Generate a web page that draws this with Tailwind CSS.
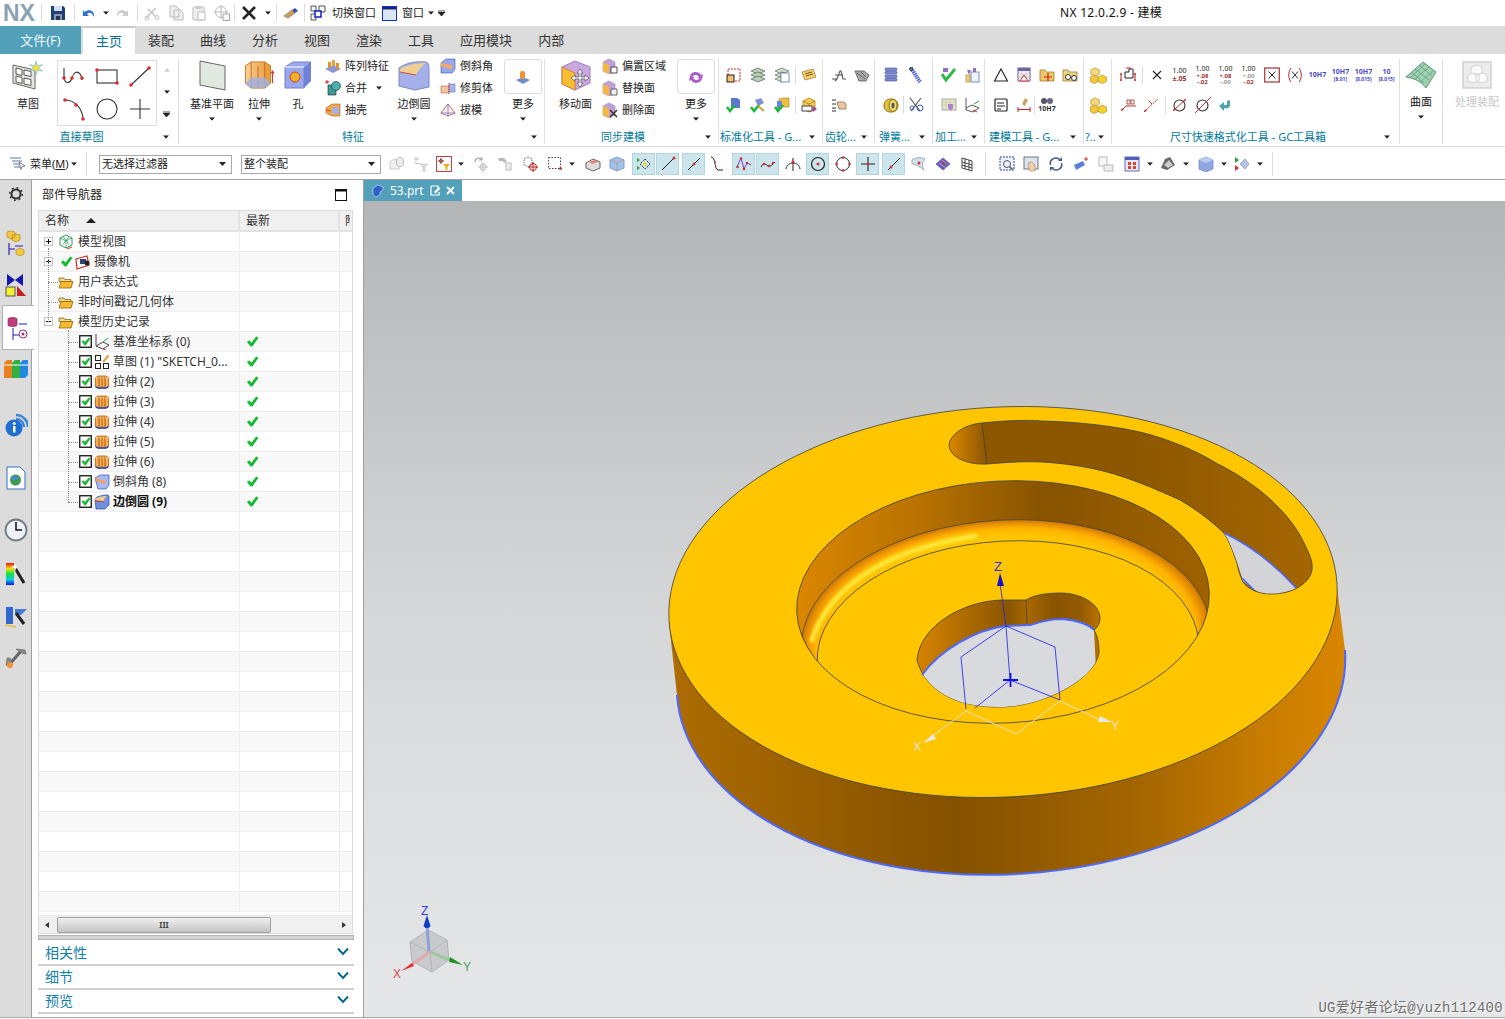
<!DOCTYPE html>
<html lang="zh">
<head>
<meta charset="utf-8">
<title>NX 12.0.2.9 - 建模</title>
<script src="https://cdn.jsdelivr.net/npm/@tailwindcss/browser@4"></script>
</head>
<body class="m-0 bg-white">
<svg class="absolute w-0 h-0" width="0" height="0">
<defs>
<linearGradient id="gOrange" x1="0" y1="0" x2="1" y2="0"><stop offset="0" stop-color="#f8d090"/><stop offset="1" stop-color="#e89a30"/></linearGradient>
<linearGradient id="gRainbow" x1="0" y1="0" x2="0" y2="1"><stop offset="0" stop-color="#f01010"/><stop offset=".25" stop-color="#f0e010"/><stop offset=".5" stop-color="#10e040"/><stop offset=".75" stop-color="#10d0e0"/><stop offset="1" stop-color="#1010e0"/></linearGradient>
</defs>
<symbol id="chk" viewBox="0 0 14 14"><path d="M1 7.5l2.800-1.800 2 2.600L11 1.500l2.500 1.400L6.800 12.500H5z" fill="#18b934"/></symbol>
<symbol id="tchk" viewBox="0 0 13 13"><rect x=".75" y=".75" width="11.500" height="11.500" fill="#fff" stroke="#111" stroke-width="1.300"/><path d="M2.500 6.500l2-1.200 1.400 1.800L10 2.500l1.500 1-4.600 6.800H5.600z" fill="#18b934"/></symbol>
<symbol id="plus" viewBox="0 0 9 9"><rect x=".5" y=".5" width="8" height="8" fill="#fff" stroke="#c4c4c4"/><path d="M2 4.500h5M4.500 2v5" stroke="#111"/></symbol>
<symbol id="minus" viewBox="0 0 9 9"><rect x=".5" y=".5" width="8" height="8" fill="#fff" stroke="#c4c4c4"/><path d="M2 4.500h5" stroke="#111"/></symbol>
<symbol id="folder" viewBox="0 0 16 14"><path d="M1 3h5l1 1.500h6v2H1z" fill="#f4d890" stroke="#8a6a10" stroke-width=".8"/><path d="M1 13L3 6.500h12L13 13z" fill="#f8b830" stroke="#8a6a10" stroke-width=".8"/></symbol>
<symbol id="ext" viewBox="0 0 16 16"><path d="M1.500 3.500L4 2h8l2.500 1.500v9L12 14H4l-2.500-1.500z" fill="#f4b050" stroke="#b85a10" stroke-width=".8"/><path d="M1.500 4h13" stroke="#fbe0b0" stroke-width="1"/><path d="M5 3v10M8 3v10M11 3v10" stroke="#b85a10"/><path d="M1.500 12.500L4 14h8l2.500-1.500" fill="none" stroke="#2040c0" stroke-width="1.300"/></symbol>
<symbol id="down" viewBox="0 0 7 4"><path d="M0 0h7L3.500 4z" fill="#222"/></symbol>
<symbol id="big-extrude" viewBox="0 0 32 32"><path d="M2 6l6-4h14l6 4v18l-6 5H8l-6-5z" fill="url(#gOrange)" stroke="#c47a2a"/><path d="M8 2v27M15 6v22M22 2v27" stroke="#c05030" stroke-width=".8" fill="none"/><path d="M2 24l6-6h14l6 6-6 5H8z" fill="#9db0e8" opacity=".8"/><path d="M30 24V12M28.500 14l1.500-3 1.500 3" stroke="#d02020" fill="none"/></symbol>
<symbol id="i-gear" viewBox="0 0 16 16"><circle cx="8" cy="8" r="4.500" fill="none" stroke="#333" stroke-width="2"/><circle cx="8" cy="8" r="6.300" fill="none" stroke="#333" stroke-width="1.500" stroke-dasharray="2 2.900"/></symbol>
<symbol id="yellowcube" viewBox="0 0 16 16"><path d="M8 1l6 3v8l-6 3-6-3V4z" fill="#f2cc50" stroke="#a88020" stroke-width=".8"/><path d="M2 4l6 3 6-3M8 7v8" fill="none" stroke="#a88020" stroke-width=".8"/></symbol>
<symbol id="yellowcubes" viewBox="0 0 20 20"><path d="M6 1l5 2.500v5L6 11 1 8.500v-5z" fill="#f4d87c" stroke="#a88020" stroke-width=".7"/><path d="M5 9.500l5 2.500v5l-5 2.500L0 17v-5z" fill="#f2c840" stroke="#a88020" stroke-width=".7"/><path d="M14.500 9.500l5 2.500v5l-5 2.500-5-2.500v-5z" fill="#f6d030" stroke="#a88020" stroke-width=".7"/></symbol>
</svg>

<div class="w-[1505px] h-[1019px] overflow-hidden flex flex-col bg-white text-[#222] text-[11px] leading-[14px] font-['Noto_Sans','Noto_Sans_CJK_SC',sans-serif]">

<!-- title bar -->
<header class="relative h-[26px] flex items-center shrink-0 bg-white">
  <span class="w-[41px] pl-[3px] text-[23px] leading-[26px] font-bold text-[#8ba2b2] font-['Liberation_Sans',sans-serif]">NX</span>
  <i class="w-px h-[18px] bg-[#ddd]"></i>
  <div class="w-[32px] flex justify-center"><svg class="w-[14px] h-[14px]" viewBox="0 0 14 14"><path d="M0 0h12l2 2v12H0z" fill="#1c3f78"/><path d="M3 0h8v5H3z" fill="#d4dfee"/><path d="M3 8h8v6H3z" fill="#8c99ac"/><path d="M5 10h4v4H5z" fill="#22334f"/></svg></div>
  <i class="w-px h-[18px] bg-[#ddd]"></i>
  <div class="w-[26px] flex justify-center ml-[1px]"><svg class="w-4 h-4" viewBox="0 0 16 16"><path d="M13 12C14 6 8 3 3.500 7L2 5v6h6L6 9c3-2.500 5-1 7 3z" fill="#2f72c8"/></svg></div>
  <svg class="w-[6px] h-[4px] ml-[1px]" viewBox="0 0 7 4"><use href="#down"/></svg>
  <div class="w-[26px] flex justify-center"><svg class="w-4 h-4" viewBox="0 0 16 16"><path d="M3 12C2 6 8 3 12.500 7L14 5v6H8l2-2C7 6.500 5 8 3 12z" fill="#ccc"/></svg></div>
  <i class="w-px h-[18px] bg-[#ddd] ml-[2px]"></i>
  <div class="flex ml-[2px]">
    <div class="w-6 flex justify-center"><svg class="w-4 h-4" viewBox="0 0 16 16"><path d="M2 13L12 3M4 4l8 8" stroke="#c4c4c4" stroke-width="1.500"/><circle cx="3" cy="13" r="2" fill="none" stroke="#c4c4c4"/><circle cx="13" cy="12.500" r="2" fill="none" stroke="#c4c4c4"/></svg></div>
    <div class="w-[23px] flex justify-center"><svg class="w-4 h-4" viewBox="0 0 16 16"><path d="M2 1h6l3 3v8H2z M6 5h6l3 3v7H6z" fill="#f0f0f0" stroke="#bbb"/></svg></div>
    <div class="w-6 flex justify-center"><svg class="w-4 h-4" viewBox="0 0 16 16"><rect x="2" y="2" width="11" height="13" rx="1" fill="#eee" stroke="#bbb"/><rect x="5" y="1" width="5" height="3" fill="#ccc"/><path d="M7 7h7v8H7z" fill="#fff" stroke="#bbb"/></svg></div>
    <div class="w-[21px] flex justify-center"><svg class="w-4 h-4" viewBox="0 0 16 16"><circle cx="7" cy="7" r="5.500" fill="none" stroke="#bbb"/><path d="M7 0v14M0 7h14" stroke="#bbb"/><rect x="9" y="9" width="6.500" height="6.500" fill="#f8f8f8" stroke="#aaa"/></svg></div>
  </div>
  <i class="w-px h-[18px] bg-[#ddd] ml-[2px]"></i>
  <div class="w-[28px] flex justify-center"><svg class="w-[14px] h-[14px]" viewBox="0 0 14 14"><path d="M1 1l12 12M13 1L1 13" stroke="#222" stroke-width="2.600"/></svg></div>
  <svg class="w-[6px] h-[4px] ml-[2px]" viewBox="0 0 7 4"><use href="#down"/></svg>
  <i class="w-px h-[18px] bg-[#ddd] ml-[5px]"></i>
  <div class="w-[27px] flex justify-center"><svg class="w-4 h-4" viewBox="0 0 16 16"><path d="M1 11l8-6 3 3-7 5z" fill="#c8a060" stroke="#806030" stroke-width=".6"/><path d="M9 5l3-2 3 3-3 2z" fill="#3050a0"/></svg></div>
  <i class="w-px h-[18px] bg-[#ddd]"></i>
  <div class="w-[26px] flex justify-center"><svg class="w-4 h-4" viewBox="0 0 16 16"><path d="M1 1h5v5H1zM9 1h6v6H9zM1 9h5v6H1z" fill="#f4f4f4" stroke="#555"/><rect x="5" y="6" width="6" height="6" fill="#fff" stroke="#1020d0" stroke-width="1.500"/></svg></div>
  <span class="w-[46px] ml-px text-[11px]">切换窗口</span>
  <div class="w-[20px] flex justify-center ml-[1px]"><svg class="w-[15px] h-[15px]" viewBox="0 0 15 15"><rect x=".5" y=".5" width="14" height="14" fill="#dbe6f4" stroke="#1030e0"/><rect x="1" y="1" width="13" height="2.500" fill="#14286a"/></svg></div>
  <span class="w-[25px] ml-[3px] text-[11px]">窗口</span>
  <svg class="w-[6px] h-[4px] ml-[1px]" viewBox="0 0 7 4"><use href="#down"/></svg>
  <svg class="w-[7px] h-[6px] ml-[4px]" viewBox="0 0 7 6"><path d="M0 0h7M0 2h7L3.500 6z" stroke="#222" stroke-width=".8" fill="#222"/></svg>
  <span class="absolute left-[1060px] top-[6px] text-[12px] leading-[14px] tracking-[.3px] text-[#111]">NX 12.0.2.9 - 建模</span>
</header>

<!-- tabs -->
<nav class="h-[28px] shrink-0 bg-[#dcdcdc] flex items-stretch text-[13px] leading-[28px] text-[#333]">
  <a class="w-[81px] text-center bg-[#53a0bb] text-[#eef7fa]">文件(F)</a>
  <span class="w-[2px]"></span>
  <a class="px-[13px] bg-white text-[#00708f] border-t-2 border-[#c8c8c8] leading-[26px]">主页</a>
  <a class="px-[13px]">装配</a><a class="px-[13px]">曲线</a><a class="px-[13px]">分析</a><a class="px-[13px]">视图</a><a class="px-[13px]">渲染</a><a class="px-[13px]">工具</a><a class="px-[13px]">应用模块</a><a class="px-[13px]">内部</a>
</nav>

<!-- ribbon -->
<section class="h-[93px] shrink-0 flex bg-white border-b border-[#ddd]">

  <!-- 直接草图 -->
  <div class="w-[179px] shrink-0 flex flex-col border-r border-[#e0e0e0] mt-[5px] mb-[2px]">
    <div class="h-[73px] flex pt-[1px]">
      <div class="w-[57px] flex flex-col items-center pr-[1px]">
        <svg class="w-[32px] h-[32px]" viewBox="0 0 32 32"><path d="M1 5l22 5v19L1 23z" fill="#e4e8e0" stroke="#666"/><path d="M4 8l6 1.500v6l-6-1.500zM12 10l7 1.500v5l-7-1.500zM4 16l6 1.500v6l-6-1.500zM12 18l7 1.500v6l-7-1.500z" fill="#fff" stroke="#555"/><path d="M24 1l1.500 5 5-1.500-4 3.500 4 3-5-1-1.500 5-1.500-5-5 1 4-3-4-3.500 5 1.500z" fill="#f4e040" stroke="#6ab0e8" stroke-width=".6"/></svg>
        <span class="mt-[5px] h-[14px]">草图</span>
      </div>
      <div class="w-[100px] h-[66px] border border-[#ddd] grid grid-cols-3 grid-rows-2">
        <div class="flex justify-center items-center"><svg class="w-[26px] h-[26px]" viewBox="0 0 26 26"><path d="M3 14V4M3 14c1 6 6 6 8 0 1-5 5-8 8-4 2 2 2 5 2 6" fill="none" stroke="#333" stroke-width="1.100"/><circle cx="3" cy="14" r="1.800" fill="#d83030"/><circle cx="11" cy="14" r="1.800" fill="#d83030"/><circle cx="21" cy="14" r="1.800" fill="#d83030"/></svg></div>
        <div class="flex justify-center items-center"><svg class="w-[26px] h-[26px]" viewBox="0 0 26 26"><rect x="3" y="6" width="20" height="13" fill="none" stroke="#333" stroke-width="1.100"/><circle cx="3" cy="6" r="1.800" fill="#d83030"/><circle cx="23" cy="19" r="1.800" fill="#d83030"/></svg></div>
        <div class="flex justify-center items-center"><svg class="w-[26px] h-[26px]" viewBox="0 0 26 26"><path d="M4 21L22 4" stroke="#333" stroke-width="1.100"/><circle cx="4" cy="21" r="1.800" fill="#d83030"/><circle cx="22" cy="4" r="1.800" fill="#d83030"/></svg></div>
        <div class="flex justify-center items-center"><svg class="w-[26px] h-[26px]" viewBox="0 0 26 26"><path d="M4 4c8 0 17 6 18 19" fill="none" stroke="#333" stroke-width="1.100"/><circle cx="4" cy="4" r="1.800" fill="#d83030"/><circle cx="22" cy="23" r="1.800" fill="#d83030"/><circle cx="15" cy="9" r="1.800" fill="#d83030"/></svg></div>
        <div class="flex justify-center items-center"><svg class="w-[26px] h-[26px]" viewBox="0 0 26 26"><circle cx="13" cy="13" r="10" fill="none" stroke="#333" stroke-width="1.100"/></svg></div>
        <div class="flex justify-center items-center"><svg class="w-[26px] h-[26px]" viewBox="0 0 26 26"><path d="M13 3v20M3 13h20" stroke="#333" stroke-width="1.100"/></svg></div>
      </div>
      <div class="w-[17px] flex flex-col items-center ml-[1px]">
        <svg class="w-[6px] h-[4px] mt-[8px]" viewBox="0 0 7 4"><path d="M0 4h7L3.500 0z" fill="#ccc"/></svg>
        <svg class="w-[6px] h-[4px] mt-[18px]" viewBox="0 0 7 4"><use href="#down"/></svg>
        <svg class="w-[7px] h-[6px] mt-[17px]" viewBox="0 0 7 6"><path d="M0 0h7M0 2h7L3.500 6z" stroke="#222" stroke-width=".8" fill="#222"/></svg>
      </div>
    </div>
    <div class="flex-1 flex items-center pl-[0px] pr-[9px]"><span class="flex-1 text-center text-[#007a9c]">直接草图</span><svg class="w-[6px] h-[4px]" viewBox="0 0 7 4"><use href="#down"/></svg></div>
  </div>

  <!-- 特征 -->
  <div class="w-[366px] shrink-0 flex flex-col border-r border-[#e0e0e0] mt-[5px] mb-[2px]">
    <div class="h-[73px] flex pt-[1px]">
      <div class="w-[56px] ml-[5px] flex flex-col items-center">
        <svg class="w-[30px] h-[31px]" viewBox="0 0 30 31"><path d="M3 1l25 5v24L3 25z" fill="#dfe9df" stroke="#666"/></svg>
        <span class="mt-[6px]">基准平面</span>
        <svg class="w-[6px] h-[4px] mt-[6px]" viewBox="0 0 7 4"><use href="#down"/></svg>
      </div>
      <div class="w-[36px] flex flex-col items-center ml-[1px]">
        <svg class="w-[32px] h-[31px]"><use href="#big-extrude"/></svg>
        <span class="mt-[6px]">拉伸</span>
        <svg class="w-[6px] h-[4px] mt-[6px]" viewBox="0 0 7 4"><use href="#down"/></svg>
      </div>
      <div class="w-[40px] flex flex-col items-center ml-[1px]">
        <svg class="w-[30px] h-[31px]" viewBox="0 0 30 31"><path d="M2 7l8-5h18l-7 6v20H2z" fill="#9aa8ee" stroke="#7080c8"/><path d="M21 8l7-6v19l-7 7z" fill="#7082d8"/><path d="M2 7h19" stroke="#fff"/><circle cx="12" cy="17" r="5" fill="#f4b028" stroke="#d04020"/></svg>
        <span class="mt-[6px]">孔</span>
      </div>
      <div class="w-[66px] ml-[7px] flex flex-col -mt-[5px]">
        <div class="h-[22px] flex items-center"><svg class="w-4 h-4" viewBox="0 0 16 16"><path d="M0 11l8-4 8 4-8 4z" fill="#8898d8"/><rect x="3" y="4" width="3" height="6" fill="#e89030"/><rect x="7" y="2" width="3" height="6" fill="#e8a040"/><rect x="11" y="5" width="3" height="6" fill="#e89030"/></svg><span class="ml-[4px] whitespace-nowrap">阵列特征</span></div>
        <div class="h-[22px] flex items-center"><svg class="w-4 h-4" viewBox="0 0 16 16"><path d="M3 5h8v10H3z" fill="#3d9a98" stroke="#222" stroke-width=".6"/><circle cx="11" cy="6" r="4.500" fill="#48b0b0" stroke="#222" stroke-width=".6"/><path d="M0 2h4M2 0v4" stroke="#d02020"/></svg><span class="ml-[4px]">合并</span><svg class="w-[6px] h-[4px] ml-[9px]" viewBox="0 0 7 4"><use href="#down"/></svg></div>
        <div class="h-[22px] flex items-center"><svg class="w-4 h-4" viewBox="0 0 16 16"><path d="M1 6l6-4h8v12H7l-6-3z" fill="#f0a848" stroke="#a06020" stroke-width=".6"/><path d="M7 5h7v7H7z" fill="#a8b0e0"/><path d="M1 8l5 1" stroke="#d04020"/></svg><span class="ml-[4px]">抽壳</span></div>
      </div>
      <div class="w-[46px] flex flex-col items-center">
        <svg class="w-[32px] h-[31px]" viewBox="0 0 32 31"><path d="M1 8c6-5 18-7 26-6 3 0 4 2 4 8v17L17 30 1 26z" fill="#a5b0ea" stroke="#7a88c8"/><path d="M2 9c6-4 18-6 26-6-4 2-9 9-10 12L2 12z" fill="#f0d090"/><path d="M2 12l16 3" stroke="#d05030"/></svg>
        <span class="mt-[6px]">边倒圆</span>
        <svg class="w-[6px] h-[4px] mt-[6px]" viewBox="0 0 7 4"><use href="#down"/></svg>
      </div>
      <div class="w-[67px] flex flex-col -mt-[5px]">
        <div class="h-[22px] flex items-center ml-[3px]"><svg class="w-4 h-4" viewBox="0 0 16 16"><path d="M1 5l5-4h9v10l-3 4H1z" fill="#98a8e8" stroke="#3050b0" stroke-width=".6"/><path d="M1 5l11 2v4L1 8z" fill="#f4a860"/></svg><span class="ml-[4px]">倒斜角</span></div>
        <div class="h-[22px] flex items-center ml-[3px]"><svg class="w-4 h-4" viewBox="0 0 16 16"><path d="M1 6h8v7H1z" fill="#f0c8a0" stroke="#c06030" stroke-width=".6"/><path d="M9 4h6v8H9z" fill="#a8b4e8" stroke="#6070c0" stroke-width=".6"/><path d="M9 3v11" stroke="#d03030" stroke-dasharray="1 1"/></svg><span class="ml-[4px]">修剪体</span></div>
        <div class="h-[22px] flex items-center ml-[3px]"><svg class="w-4 h-4" viewBox="0 0 16 16"><path d="M1 11l7-9 7 9-7 3z" fill="#f8f0f0" stroke="#d04040" stroke-width=".8"/><path d="M1 11h14M8 2v12" stroke="#4060c0" stroke-width=".6"/></svg><span class="ml-[4px]">拔模</span></div>
      </div>
      <div class="w-[38px] h-[70px] flex flex-col items-center">
        <div class="w-[38px] h-[35px] border border-[#ddd] rounded-[3px] flex items-center justify-center -mt-[1px]"><svg class="w-4 h-4" viewBox="0 0 16 16"><path d="M1 11l7-3 7 3-7 4z" fill="#6f8fcc"/><rect x="5" y="2" width="5" height="8" rx="2" fill="#f09038"/></svg></div>
        <span class="mt-[3px]">更多</span>
        <svg class="w-[6px] h-[4px] mt-[6px]" viewBox="0 0 7 4"><use href="#down"/></svg>
      </div>
    </div>
    <div class="flex-1 flex items-center pr-[7px]"><span class="flex-1 text-center text-[#007a9c] pr-[4px]">特征</span><svg class="w-[6px] h-[4px]" viewBox="0 0 7 4"><use href="#down"/></svg></div>
  </div>

  <!-- 同步建模 -->
  <div class="w-[174px] shrink-0 flex flex-col border-r border-[#e0e0e0] mt-[5px] mb-[2px]">
    <div class="h-[73px] flex pt-[1px]">
      <div class="w-[53px] flex flex-col items-center ml-[4px]">
        <svg class="w-[32px] h-[31px]" viewBox="0 0 32 31"><path d="M2 7l13-6 15 6v16l-15 7-13-6z" fill="#c9a8e0" stroke="#a080c0"/><path d="M2 7l13 6v17l-13-6z" fill="#f8c030" stroke="#d07030" stroke-width=".8"/><path d="M20 9l3 4h-2v4h4v-2l4 3-4 3v-2h-4v4h2l-3 4-3-4h2v-4h-4v2l-4-3 4-3v2h4v-4h-2z" fill="#f4f4f4" stroke="#555" stroke-width=".7"/></svg>
        <span class="mt-[6px]">移动面</span>
      </div>
      <div class="w-[75px] flex flex-col -mt-[5px]">
        <div class="h-[22px] flex items-center"><svg class="w-4 h-4" viewBox="0 0 16 16"><path d="M1 4l6-3 6 3v9l-6 3-6-3z" fill="#c0a0d8" stroke="#a080c0" stroke-width=".6"/><path d="M1 4l6 3v9l-6-3z" fill="#f4b840"/><path d="M9 9h6v6H9z" fill="#fff" stroke="#222" stroke-width=".8"/></svg><span class="ml-[4px]">偏置区域</span></div>
        <div class="h-[22px] flex items-center"><svg class="w-4 h-4" viewBox="0 0 16 16"><path d="M1 4l6-3 6 3v9l-6 3-6-3z" fill="#c0a0d8" stroke="#a080c0" stroke-width=".6"/><path d="M1 4l6 3v9l-6-3z" fill="#f4b840"/><path d="M9 9h6v6H9z" fill="#eee" stroke="#444" stroke-width=".8"/></svg><span class="ml-[4px]">替换面</span></div>
        <div class="h-[22px] flex items-center"><svg class="w-4 h-4" viewBox="0 0 16 16"><path d="M1 4l6-3 6 3v9l-6 3-6-3z" fill="#c0a0d8" stroke="#a080c0" stroke-width=".6"/><path d="M1 4l6 3v9l-6-3z" fill="#f4b840"/><path d="M8 8l7 7M15 8l-7 7" stroke="#333" stroke-width="1.500"/></svg><span class="ml-[4px]">删除面</span></div>
      </div>
      <div class="w-[38px] flex flex-col items-center">
        <div class="w-[38px] h-[35px] border border-[#ddd] rounded-[3px] flex items-center justify-center -mt-[1px]"><svg class="w-4 h-4" viewBox="0 0 16 16"><path d="M2 8c0-5 8-7 11-2l2-1-1 5-5-1 2-1c-2-3-6-2-7 0zM14 9c0 5-8 7-11 2l-2 1 1-5 5 1-2 1c2 3 6 2 7 0z" fill="#a860c8"/></svg></div>
        <span class="mt-[3px]">更多</span>
        <svg class="w-[6px] h-[4px] mt-[6px]" viewBox="0 0 7 4"><use href="#down"/></svg>
      </div>
    </div>
    <div class="flex-1 flex items-center pr-[7px]"><span class="flex-1 text-center text-[#007a9c] pr-[4px]">同步建模</span><svg class="w-[6px] h-[4px]" viewBox="0 0 7 4"><use href="#down"/></svg></div>
  </div>

  <!-- 标准化工具 -->
  <div class="w-[104px] shrink-0 flex flex-col border-r border-[#e0e0e0] mt-[5px] mb-[2px]">
    <div class="h-[73px] pl-[3px] pt-[1px]">
      <div class="flex h-[30px] items-center">
        <div class="w-6 flex justify-center"><svg class="w-4 h-4" viewBox="0 0 16 16"><rect x="2" y="2" width="12" height="12" fill="none" stroke="#d03030" stroke-dasharray="2 1"/><rect x="1" y="8" width="7" height="7" fill="#f0c070" stroke="#222"/></svg></div>
        <div class="w-6 flex justify-center"><svg class="w-4 h-4" viewBox="0 0 16 16"><g fill="#bcd0b8" stroke="#506850" stroke-width=".7"><path d="M1 4l7-3 7 3-7 3z"/><path d="M1 8l7-3 7 3-7 3z"/><path d="M1 12l7-3 7 3-7 3z"/></g></svg></div>
        <div class="w-6 flex justify-center"><svg class="w-4 h-4" viewBox="0 0 16 16"><g fill="#cfdcc8" stroke="#607060" stroke-width=".7"><path d="M1 4l7-3 7 3-7 3z"/><path d="M1 8l7-3 7 3-7 3z"/><path d="M1 12l7-3 7 3-7 3z"/></g><rect x="7" y="6" width="8" height="9" fill="#fff" stroke="#4060a0" stroke-width=".7"/></svg></div>
        <i class="w-px h-[18px] bg-[#ddd] mx-[1px]"></i>
        <div class="w-6 flex justify-center"><svg class="w-4 h-4" viewBox="0 0 16 16"><path d="M1 5l11-3 3 8-11 3z" fill="#f4cf70" stroke="#a07020" stroke-width=".7"/><path d="M4 7l7-2M5 9l7-2" stroke="#805010"/></svg></div>
      </div>
      <div class="flex h-[30px] items-center">
        <div class="w-6 flex justify-center"><svg class="w-4 h-4" viewBox="0 0 16 16"><path d="M5 1h6l3 2v8H5z" fill="#5878d0"/><path d="M1 10l3 4 5-6" stroke="#18b934" stroke-width="2.500" fill="none"/></svg></div>
        <div class="w-6 flex justify-center"><svg class="w-4 h-4" viewBox="0 0 16 16"><path d="M5 3l6-2 3 5-6 3z" fill="#8090d8"/><path d="M1 10l3 4 5-6" stroke="#18b934" stroke-width="2.500" fill="none"/><path d="M8 9l6 5" stroke="#d0a040" stroke-width="2"/></svg></div>
        <div class="w-6 flex justify-center"><svg class="w-4 h-4" viewBox="0 0 16 16"><path d="M5 2l4-1h6v9H5z" fill="#f0c040" stroke="#a08020" stroke-width=".6"/><path d="M3 4h5v8H3z" fill="#6888d8"/><path d="M1 10l3 4 5-6" stroke="#18b934" stroke-width="2.500" fill="none"/></svg></div>
        <i class="w-px h-[18px] bg-[#ddd] mx-[1px]"></i>
        <div class="w-6 flex justify-center"><svg class="w-4 h-4" viewBox="0 0 16 16"><use href="#yellowcube"/><rect x="1" y="9" width="10" height="5" fill="#fff" stroke="#444"/><path d="M12 9l4 3-4 3z" fill="#b040b0"/></svg></div>
      </div>
    </div>
    <div class="flex-1 flex items-center pr-[7px] pl-[1px]"><span class="flex-1 text-[#007a9c]">标准化工具 - G...</span><svg class="w-[6px] h-[4px]" viewBox="0 0 7 4"><use href="#down"/></svg></div>
  </div>

  <!-- 齿轮 -->
  <div class="w-[52px] shrink-0 flex flex-col border-r border-[#e0e0e0] mt-[5px] mb-[2px]">
    <div class="h-[73px] pl-[4px] pt-[1px]">
      <div class="flex h-[30px] items-center">
        <div class="w-[23px] flex justify-center"><svg class="w-4 h-4" viewBox="0 0 16 16"><path d="M1 12h5l3-8h1l2 8h3M6 12l-2 2M4 8h8" fill="none" stroke="#555" stroke-width="1.100"/></svg></div>
        <div class="w-[23px] flex justify-center"><svg class="w-4 h-4" viewBox="0 0 16 16"><path d="M1 4h9l5 4-3 6H5z" fill="#aaa" stroke="#444" stroke-width=".7"/><path d="M3 6l8 6M7 5l5 5" stroke="#444" stroke-width=".7"/></svg></div>
      </div>
      <div class="flex h-[30px] items-center">
        <div class="w-[23px] flex justify-center"><svg class="w-4 h-4" viewBox="0 0 16 16"><path d="M1 3h4M1 7h4M1 11h4M1 14h4" stroke="#333"/><path d="M6 5h7l2 2v5H8z" fill="#e8c8a0" stroke="#806040" stroke-width=".7"/></svg></div>
      </div>
    </div>
    <div class="flex-1 flex items-center pr-[7px] pl-[2px]"><span class="flex-1 text-[#007a9c]">齿轮...</span><svg class="w-[6px] h-[4px]" viewBox="0 0 7 4"><use href="#down"/></svg></div>
  </div>

  <!-- 弹簧 -->
  <div class="w-[58px] shrink-0 flex flex-col border-r border-[#e0e0e0] mt-[5px] mb-[2px]">
    <div class="h-[73px] pl-[4px] pt-[1px]">
      <div class="flex h-[30px] items-center">
        <div class="w-6 flex justify-center"><svg class="w-4 h-4" viewBox="0 0 16 16"><g fill="#7c8cd8" stroke="#404c98" stroke-width=".6"><rect x="2" y="1" width="12" height="2.500" rx="1"/><rect x="2" y="4.500" width="12" height="2.500" rx="1"/><rect x="2" y="8" width="12" height="2.500" rx="1"/><rect x="2" y="11.500" width="12" height="2.500" rx="1"/></g></svg></div>
        <div class="w-6 flex justify-center"><svg class="w-4 h-4" viewBox="0 0 16 16"><path d="M4 1l9 14" stroke="#5068c8" stroke-width="4" stroke-dasharray="1.500 .7"/><circle cx="4" cy="2" r="1.500" fill="none" stroke="#333"/></svg></div>
      </div>
      <div class="flex h-[30px] items-center">
        <div class="w-6 flex justify-center"><svg class="w-4 h-4" viewBox="0 0 16 16"><rect x="1" y="2" width="14" height="13" rx="6" fill="#e0c040" stroke="#907010"/><ellipse cx="10" cy="8.500" rx="4" ry="6" fill="#f0dc70" stroke="#907010"/><ellipse cx="10" cy="8.500" rx="1.500" ry="3" fill="#555"/></svg></div>
        <i class="w-px h-[18px] bg-[#ddd]"></i>
        <div class="w-6 flex justify-center"><svg class="w-4 h-4" viewBox="0 0 16 16"><path d="M2 1l10 13M13 1L3 14" stroke="#555" stroke-width="1.200"/><circle cx="12" cy="11" r="3" fill="none" stroke="#4060c0"/><circle cx="4" cy="11" r="2" fill="none" stroke="#4060c0"/></svg></div>
      </div>
    </div>
    <div class="flex-1 flex items-center pr-[7px] pl-[4px]"><span class="flex-1 text-[#007a9c]">弹簧...</span><svg class="w-[6px] h-[4px]" viewBox="0 0 7 4"><use href="#down"/></svg></div>
  </div>

  <!-- 加工 -->
  <div class="w-[52px] shrink-0 flex flex-col border-r border-[#e0e0e0] mt-[5px] mb-[2px]">
    <div class="h-[73px] pl-[4px] pt-[1px]">
      <div class="flex h-[30px] items-center">
        <div class="w-6 flex justify-center"><svg class="w-4 h-4" viewBox="0 0 16 16"><path d="M1 7l4 6 9-11" stroke="#30b848" stroke-width="3" fill="none"/><rect x="2" y="1" width="5" height="4" fill="#9070c0"/></svg></div>
        <div class="w-6 flex justify-center"><svg class="w-4 h-4" viewBox="0 0 16 16"><rect x="7" y="5" width="8" height="10" fill="#eef2fa" stroke="#8090b0"/><path d="M3 3l2 5 2-5z M9 1h3v4H9z" fill="#9070c0"/><rect x="2" y="8" width="4" height="7" fill="#e8d080" stroke="#a08020" stroke-width=".6"/></svg></div>
      </div>
      <div class="flex h-[30px] items-center">
        <div class="w-6 flex justify-center"><svg class="w-4 h-4" viewBox="0 0 16 16"><rect x="1" y="2" width="14" height="11" fill="#e8e8c8" stroke="#aaa"/><path d="M1 5h14M1 8h14M5 2v11M9 2v11" stroke="#c0c0a0" stroke-width=".6"/><path d="M7 7h5v4l-2 3-3-3z" fill="#b080d0"/></svg></div>
        <div class="w-6 flex justify-center"><svg class="w-4 h-4" viewBox="0 0 16 16"><path d="M2 2v11l7 2 6-4-7-3-6 3" fill="none" stroke="#444" stroke-width=".9"/><path d="M2 2v-1" stroke="#2040d0"/><path d="M10 7l5-3" stroke="#20a040"/><path d="M9 13l4 2" stroke="#d03030"/></svg></div>
      </div>
    </div>
    <div class="flex-1 flex items-center pr-[7px] pl-[2px]"><span class="flex-1 text-[#007a9c]">加工...</span><svg class="w-[6px] h-[4px]" viewBox="0 0 7 4"><use href="#down"/></svg></div>
  </div>

  <!-- 建模工具 -->
  <div class="w-[99px] shrink-0 flex flex-col border-r border-[#e0e0e0] mt-[5px] mb-[2px]">
    <div class="h-[73px] pl-[4px] pt-[1px]">
      <div class="flex h-[30px] items-center">
        <div class="w-[23px] flex justify-center"><svg class="w-4 h-4" viewBox="0 0 16 16"><path d="M8 2l6.500 12h-13z" fill="#fff" stroke="#222" stroke-width="1.100"/></svg></div>
        <div class="w-[23px] flex justify-center"><svg class="w-4 h-4" viewBox="0 0 16 16"><rect x="2" y="1" width="12" height="13" fill="#f4f0ee" stroke="#7060a0"/><rect x="2" y="1" width="12" height="3" fill="#7060a8"/><path d="M2 7h12M2 10h12M6 4v10M10 4v10" stroke="#bbb" stroke-width=".5"/><path d="M8 8l4 6H4z" fill="#fff" stroke="#d03030"/></svg></div>
        <div class="w-[23px] flex justify-center"><svg class="w-4 h-4" viewBox="0 0 16 16"><path d="M1 3h5l1 2h8v9H1z" fill="#ecc868" stroke="#907020" stroke-width=".7"/><path d="M9 6v8M5 10h8" stroke="#d02020" stroke-width="1.200"/></svg></div>
        <div class="w-[23px] flex justify-center"><svg class="w-4 h-4" viewBox="0 0 16 16"><path d="M1 3h5l1 2h8v9H1z" fill="#ecd484" stroke="#907020" stroke-width=".7"/><circle cx="6" cy="10" r="2.500" fill="#fff" stroke="#333"/><circle cx="12" cy="11" r="2.500" fill="#fff" stroke="#333"/></svg></div>
      </div>
      <div class="flex h-[30px] items-center">
        <div class="w-[23px] flex justify-center"><svg class="w-4 h-4" viewBox="0 0 16 16"><rect x="2" y="2" width="12" height="12" rx="1" fill="#fff" stroke="#222" stroke-width="1.200"/><path d="M4 6h7M4 9h8M4 12h4" stroke="#222"/></svg></div>
        <div class="w-[23px] flex justify-center"><svg class="w-4 h-4" viewBox="0 0 16 16"><path d="M9 1l3 2-3 6-3-2z" fill="#c8a868"/><path d="M2 10v5M14 10v5M2 12.500h12" stroke="#c02020"/></svg></div>
        <i class="w-px h-[18px] bg-[#ddd] -ml-[1px]"></i>
        <div class="w-[24px] flex flex-col items-center leading-[8px]"><svg class="w-[14px] h-[8px]" viewBox="0 0 14 8"><circle cx="4" cy="4" r="3" fill="#556"/><circle cx="10" cy="4" r="3" fill="#668"/></svg><span class="text-[7px] font-bold text-[#333]">10H7</span></div>
      </div>
    </div>
    <div class="flex-1 flex items-center pr-[7px] pl-[4px]"><span class="flex-1 text-[#007a9c]">建模工具 - G...</span><svg class="w-[6px] h-[4px]" viewBox="0 0 7 4"><use href="#down"/></svg></div>
  </div>

  <!-- ?.. -->
  <div class="w-[28px] shrink-0 flex flex-col border-r border-[#e0e0e0] mt-[5px] mb-[2px]">
    <div class="h-[73px] pl-[6px] pt-[1px]">
      <div class="flex h-[30px] items-center"><svg class="w-[17px] h-[17px]"><use href="#yellowcubes"/></svg></div>
      <div class="flex h-[30px] items-center"><svg class="w-[17px] h-[17px]"><use href="#yellowcubes"/></svg></div>
    </div>
    <div class="flex-1 flex items-center pr-[7px] pl-px"><span class="flex-1 text-[#007a9c]">?..</span><svg class="w-[6px] h-[4px]" viewBox="0 0 7 4"><use href="#down"/></svg></div>
  </div>

  <!-- 尺寸快速格式化工具 -->
  <div class="w-[288px] shrink-0 flex flex-col border-r border-[#e0e0e0] mt-[5px] mb-[2px]">
    <div class="h-[73px] pl-[4px] pt-[1px]">
      <div class="flex h-[30px] items-center">
        <div class="w-6 flex justify-center"><svg class="w-[16px] h-[16px]" viewBox="0 0 16 16"><path d="M5 5h4V2h4v9H5z" fill="none" stroke="#222"/><path d="M1 6v8M0 7h2M0 13h2M15 6v8M14 7h2M14 13h2M6 1h5" stroke="#c02020"/></svg></div>
        <div class="w-[5px] flex justify-center"><i class="w-px h-[18px] bg-[#ddd]"></i></div>
        <div class="w-[23px] flex justify-center"><svg class="w-[10px] h-[10px]" viewBox="0 0 10 10"><path d="M1 1l8 8M9 1L1 9" stroke="#222" stroke-width="1.100"/></svg></div>
        <div class="w-[23px] flex flex-col items-center text-[7px] leading-[8px]"><span class="text-[#222]">1.00</span><span class="text-[#a03030] font-bold">±.05</span></div>
        <div class="w-[23px] flex flex-col items-center text-[7px] leading-[8px]"><span class="text-[#222]">1.00</span><span class="text-[#a03030] text-[6px] leading-[6px] font-bold">+.08</span><span class="text-[#a03030] text-[6px] leading-[6px] font-bold">-.02</span></div>
        <div class="w-[23px] flex flex-col items-center text-[7px] leading-[8px]"><span class="text-[#222]">1.00</span><span class="text-[#a03030] text-[6px] leading-[6px] font-bold">+.08</span><span class="text-[#999] text-[6px] leading-[6px] font-bold">-.00</span></div>
        <div class="w-[23px] flex flex-col items-center text-[7px] leading-[8px]"><span class="text-[#222]">1.00</span><span class="text-[#999] text-[6px] leading-[6px] font-bold">+.00</span><span class="text-[#a03030] text-[6px] leading-[6px] font-bold">-.02</span></div>
        <div class="w-[23px] flex justify-center"><svg class="w-4 h-4" viewBox="0 0 16 16"><rect x=".75" y="1" width="14.500" height="14" fill="#fff" stroke="#a03030" stroke-width="1.200"/><path d="M4.500 4.500l7 7M11.500 4.500l-7 7" stroke="#222"/></svg></div>
        <div class="w-[23px] flex justify-center"><svg class="w-4 h-4" viewBox="0 0 16 16"><path d="M4 1C1 5 1 11 4 15M12 1c3 4 3 10 0 14" fill="none" stroke="#a03030"/><path d="M5 4.500l6 7M11 4.500l-6 7" stroke="#333"/></svg></div>
        <div class="w-[23px] text-center text-[7px] font-bold text-[#4a4ac8]">10H7</div>
        <div class="w-[23px] flex flex-col items-center text-[7px] leading-[8px] font-bold text-[#4a4ac8]"><span>10H7</span><span class="text-[5px] leading-[7px]">[8.01]</span></div>
        <div class="w-[23px] flex flex-col items-center text-[7px] leading-[8px] font-bold text-[#4a4ac8]"><span>10H7</span><span class="text-[5px] leading-[7px]">[8.015]</span></div>
        <div class="w-[23px] flex flex-col items-center text-[7px] leading-[8px] font-bold text-[#4a4ac8]"><span>10</span><span class="text-[5px] leading-[7px]">[8.015]</span></div>
      </div>
      <div class="flex h-[30px] items-center">
        <div class="w-6 flex justify-center"><svg class="w-4 h-4" viewBox="0 0 16 16"><path d="M1 14l5-5h10" fill="none" stroke="#c03030"/><path d="M1 14l1-3 2 2z" fill="#c03030"/><rect x="7" y="3" width="3" height="4" fill="none" stroke="#a03030" stroke-width=".8"/><rect x="11" y="3" width="3" height="4" fill="none" stroke="#a03030" stroke-width=".8"/></svg></div>
        <div class="w-[22px] flex justify-center"><svg class="w-4 h-4" viewBox="0 0 16 16"><path d="M1 15L15 2" stroke="#c03030" stroke-dasharray="2 1"/><path d="M1 15l1-3 2 2z" fill="#c03030"/><path d="M6 4l3 3" stroke="#a03030"/></svg></div>
        <div class="w-[6px] flex justify-center"><i class="w-px h-[18px] bg-[#ddd]"></i></div>
        <div class="w-[23px] flex justify-center"><svg class="w-4 h-4" viewBox="0 0 16 16"><circle cx="7.500" cy="8.500" r="5.500" fill="none" stroke="#333" stroke-width="1.100"/><path d="M1 14L14 2" stroke="#c03030"/><path d="M1 14l3-1-2-2zM14 2l-3 1 2 2z" fill="#c03030"/></svg></div>
        <div class="w-[23px] flex justify-center"><svg class="w-4 h-4" viewBox="0 0 16 16"><circle cx="7.500" cy="8.500" r="5.500" fill="none" stroke="#333" stroke-width="1.100"/><path d="M0 16L16 0" stroke="#c03030"/></svg></div>
        <div class="w-[23px] flex justify-center"><svg class="w-4 h-4" viewBox="0 0 16 16"><path d="M12 3v5c0 3-3 4-6 3v3L1 9l5-4v3c2 0 3 0 3-1V4z" fill="#4fa4ac"/></svg></div>
      </div>
    </div>
    <div class="flex-1 flex items-center pr-[9px]"><span class="flex-1 text-center text-[#007a9c]">尺寸快速格式化工具 - GC工具箱</span><svg class="w-[6px] h-[4px]" viewBox="0 0 7 4"><use href="#down"/></svg></div>
  </div>

  <!-- 曲面 -->
  <div class="w-[43px] shrink-0 flex flex-col border-r border-[#e0e0e0] mt-[5px] mb-[2px]">
    <div class="flex flex-col items-center pt-[2px]">
      <svg class="w-[32px] h-[28px]" viewBox="0 0 32 28"><path d="M1 16L18 1l13 10-10 16C16 20 8 17 1 16z" fill="#9fd0b0" stroke="#5a9a78"/><path d="M6 11l13 11M10 8l14 11M14 4l13 11M5 17L20 3M10 18L24 6M15 21L28 10" stroke="#4c9070" stroke-width=".6"/></svg>
      <span class="mt-[6px] text-[#111]">曲面</span>
      <svg class="w-[6px] h-[4px] mt-[6px]" viewBox="0 0 7 4"><use href="#down"/></svg>
    </div>
  </div>

  <!-- 处理装配 -->
  <div class="flex-1 flex flex-col items-center mt-[5px] mb-[2px] pt-[2px] pl-[6px]">
    <svg class="w-[30px] h-[28px]" viewBox="0 0 30 28"><rect x="1" y="1" width="28" height="26" fill="#ececec" stroke="#d0d0d0" stroke-width="1.500"/><path d="M9 6l6-2 5 2v6l-5 2-6-2z M14 14l6-2 5 2v6l-5 2-6-2z M6 14l6-2 5 2v6l-5 2-6-2z" fill="#fbfbfb" stroke="#d4d4d4"/></svg>
    <span class="mt-[6px] text-[#c8c8c8]">处理装配</span>
  </div>
</section>

<!-- toolbar -->
<section class="h-[33px] shrink-0 flex items-center bg-white border-b border-[#a0a0a0] relative pt-[2px]">
  <div class="w-[86px] flex items-center pl-[10px]">
    <svg class="w-4 h-4" viewBox="0 0 16 16"><path d="M0 2h11M2 5h10M3 8h9M4 11h8" stroke="#5878a8"/><path d="M9 6l6 4-3 .5-1 3z" fill="#fff" stroke="#555" stroke-width=".7"/></svg>
    <span class="ml-[4px]">菜单(<u>M</u>)</span>
    <svg class="w-[6px] h-[4px] ml-[2px]" viewBox="0 0 7 4"><use href="#down"/></svg>
  </div>
  <i class="w-px h-[24px] bg-[#ddd]"></i>
  <div class="ml-[12px] w-[133px] h-[19px] border border-[#a8a8a8] flex items-center pl-[2px] pr-[5px]"><span class="flex-1">无选择过滤器</span><svg class="w-[7px] h-[4px]" viewBox="0 0 7 4"><use href="#down"/></svg></div>
  <div class="ml-[9px] w-[140px] h-[19px] border border-[#a8a8a8] flex items-center pl-[2px] pr-[5px]"><span class="flex-1">整个装配</span><svg class="w-[7px] h-[4px]" viewBox="0 0 7 4"><use href="#down"/></svg></div>
  <div class="ml-[4px] w-6 flex justify-center"><svg class="w-4 h-4" viewBox="0 0 16 16"><path d="M1 6l4-3 5 2v8H1z" fill="#eee" stroke="#ccc"/><ellipse cx="11" cy="6" rx="3.500" ry="4.500" fill="#eee" stroke="#bbb"/></svg></div>
  <div class="w-6 flex justify-center"><svg class="w-4 h-4" viewBox="0 0 16 16"><path d="M1 3h5M3 1v4M2 6c1 2 3 2 5 1" stroke="#c4c4c4" stroke-width="1.200" fill="none"/><path d="M7 8h8l-3 3v4h-2v-4z" fill="#ddd" stroke="#bbb" stroke-width=".6"/></svg></div>
  <div class="w-[22px] flex justify-center"><svg class="w-[16px] h-[16px]" viewBox="0 0 16 16"><rect x=".5" y=".5" width="15" height="15" fill="#fff" stroke="#c04040"/><path d="M2 5h6M5 2v6" stroke="#555"/><circle cx="5" cy="5" r="1.500" fill="none" stroke="#c03030"/><path d="M7 8h7l-2.500 3v3h-2v-3z" fill="#f0b020"/></svg></div>
  <div class="w-3 flex justify-center"><svg class="w-[6px] h-[4px]" viewBox="0 0 7 4"><use href="#down"/></svg></div>
  <div class="ml-[2px] w-6 flex justify-center"><svg class="w-4 h-4" viewBox="0 0 16 16"><path d="M2 6c0-4 5-5 7-2M9 1v3H6" fill="none" stroke="#aaa" stroke-width="1.200"/><circle cx="10" cy="11" r="3" fill="none" stroke="#bbb"/><path d="M10 6v10M5 11h10" stroke="#bbb"/></svg></div>
  <div class="w-6 flex justify-center"><svg class="w-4 h-4" viewBox="0 0 16 16"><path d="M1 2h6l3 3-2 2-3-2H2z" fill="#bbb"/><rect x="9" y="7" width="5" height="7" fill="#eee" stroke="#bbb"/></svg></div>
  <div class="ml-px w-6 flex justify-center"><svg class="w-4 h-4" viewBox="0 0 16 16"><path d="M2 3l4-2 4 2v6l-4 2-4-2z" fill="none" stroke="#555" stroke-dasharray="1 1"/><circle cx="11" cy="11" r="3.500" fill="none" stroke="#c02020"/><path d="M11 6v10M6 11h10" stroke="#c02020"/></svg></div>
  <div class="ml-px w-6 flex justify-center"><svg class="w-4 h-4" viewBox="0 0 16 16"><rect x="1.500" y="1.500" width="12" height="11" fill="none" stroke="#444" stroke-dasharray="1.500 1.500"/><circle cx="13.500" cy="12.500" r="1.500" fill="#d03030"/></svg></div>
  <div class="w-[10px] flex justify-center"><svg class="w-[6px] h-[4px]" viewBox="0 0 7 4"><use href="#down"/></svg></div>
  <div class="ml-[4px] w-6 flex justify-center"><svg class="w-4 h-4" viewBox="0 0 16 16"><path d="M1 7l7-4 7 3v6l-7 3-7-3z" fill="#ddd" stroke="#666"/><path d="M4 6l6-2 3 2-6 2z" fill="#f08070"/></svg></div>
  <div class="w-6 flex justify-center"><svg class="w-4 h-4" viewBox="0 0 16 16"><path d="M1 4l7-3 7 3v8l-7 3-7-3z" fill="#9bc4e8" stroke="#8aa0d0"/><path d="M8 7v8M1 4l7 3 7-3" fill="none" stroke="#e08070" stroke-width=".7"/></svg></div>
  <div class="ml-[3px] w-[23px] h-[22px] bg-[#cce4ec] border border-[#b0d6e0] flex items-center justify-center"><svg class="w-4 h-4" viewBox="0 0 16 16"><path d="M1 2l3 2-3 2zM1 10l3 2-3 2z" fill="#20a040"/><path d="M9 3l5 5-5 5-5-5z" fill="none" stroke="#222" stroke-dasharray="1.500 1"/><circle cx="9" cy="8" r="1.800" fill="#f0d020"/></svg></div>
  <div class="ml-px w-[23px] h-[22px] bg-[#cce4ec] border border-[#b0d6e0] flex items-center justify-center"><svg class="w-4 h-4" viewBox="0 0 16 16"><path d="M2 14L14 2" stroke="#222"/><circle cx="14" cy="2" r="1.500" fill="#d03030"/></svg></div>
  <div class="ml-[3px] w-[23px] h-[22px] bg-[#cce4ec] border border-[#b0d6e0] flex items-center justify-center"><svg class="w-4 h-4" viewBox="0 0 16 16"><path d="M2 14L14 2" stroke="#222"/><circle cx="8" cy="8" r="1.500" fill="#d03030"/></svg></div>
  <div class="ml-px w-6 flex justify-center"><svg class="w-4 h-4" viewBox="0 0 16 16"><path d="M1 1c5 0 3 12 7 13h5" fill="none" stroke="#222"/><circle cx="5" cy="6" r=".9" fill="#d03030"/></svg></div>
  <div class="ml-[2px] w-[23px] h-[22px] bg-[#cce4ec] border border-[#b0d6e0] flex items-center justify-center"><svg class="w-4 h-4" viewBox="0 0 16 16"><path d="M1 11l4-9 3 11 3-6 4 2" fill="none" stroke="#8040c0"/><g fill="#d03030"><circle cx="1.500" cy="11" r="1.300"/><circle cx="5" cy="2.500" r="1.300"/><circle cx="8" cy="13" r="1.300"/><circle cx="11" cy="7" r="1.300"/></g></svg></div>
  <div class="ml-px w-[23px] h-[22px] bg-[#cce4ec] border border-[#b0d6e0] flex items-center justify-center"><svg class="w-4 h-4" viewBox="0 0 16 16"><path d="M1 11c3-6 5-2 7-1s4-1 7-4" fill="none" stroke="#222"/><g fill="#d03030"><circle cx="4" cy="8" r="1.300"/><circle cx="9" cy="10" r="1.300"/><circle cx="13" cy="7" r="1.300"/></g></svg></div>
  <div class="ml-[2px] w-6 flex justify-center"><svg class="w-4 h-4" viewBox="0 0 16 16"><path d="M1 13c1-8 13-8 14 0M8 2v13" fill="none" stroke="#222"/><circle cx="8" cy="6" r="1.500" fill="#d03030"/></svg></div>
  <div class="ml-px w-[23px] h-[22px] bg-[#cce4ec] border border-[#b0d6e0] flex items-center justify-center"><svg class="w-4 h-4" viewBox="0 0 16 16"><circle cx="8" cy="8" r="6.500" fill="none" stroke="#222" stroke-width="1.200"/><circle cx="8" cy="8" r="1.500" fill="#d03030"/></svg></div>
  <div class="ml-[2px] w-6 flex justify-center"><svg class="w-4 h-4" viewBox="0 0 16 16"><circle cx="8" cy="8" r="6.500" fill="none" stroke="#222"/><g fill="#d03030"><circle cx="8" cy="1.500" r="1.300"/><circle cx="8" cy="14.500" r="1.300"/><circle cx="1.500" cy="8" r="1.300"/><circle cx="14.500" cy="8" r="1.300"/></g></svg></div>
  <div class="ml-px w-[23px] h-[22px] bg-[#cce4ec] border border-[#b0d6e0] flex items-center justify-center"><svg class="w-4 h-4" viewBox="0 0 16 16"><path d="M1 8h14M8 1v14" stroke="#222" stroke-width="1.100"/><circle cx="8" cy="8" r="1.200" fill="#d03030"/></svg></div>
  <div class="ml-[3px] w-[23px] h-[22px] bg-[#cce4ec] border border-[#b0d6e0] flex items-center justify-center"><svg class="w-4 h-4" viewBox="0 0 16 16"><path d="M2 14L14 2" stroke="#222"/><circle cx="5" cy="11" r="1.500" fill="#d03030"/></svg></div>
  <div class="ml-px w-6 flex justify-center"><svg class="w-4 h-4" viewBox="0 0 16 16"><path d="M2 4c4-3 9-3 13-1-3 3-3 8-1 11C9 10 5 8 2 8z" fill="#cfe0f0" stroke="#aaa"/><circle cx="9" cy="7" r="1.500" fill="#d03030"/></svg></div>
  <div class="ml-px w-6 flex justify-center"><svg class="w-4 h-4" viewBox="0 0 16 16"><path d="M1 8l7-6 7 6-7 6z" fill="#6a60b8" stroke="#443c90" stroke-width=".6"/><circle cx="9" cy="7" r="1.500" fill="#d03030"/><path d="M4 7l7 5M7 4l6 5" stroke="#c8c4e8" stroke-width=".6"/></svg></div>
  <div class="w-6 flex justify-center"><svg class="w-4 h-4" viewBox="0 0 16 16"><path d="M3 2l10 3v10L3 12zM3 6l10 3M3 9l10 3M6 3v10M10 4v10" fill="none" stroke="#333" stroke-width=".9"/></svg></div>
  <i class="w-px h-[24px] bg-[#ddd] ml-[6px]"></i>
  <div class="ml-[9px] w-6 flex justify-center"><svg class="w-4 h-4" viewBox="0 0 16 16"><rect x="1" y="1" width="14" height="13" fill="#eef2fa" stroke="#3040c0" stroke-dasharray="2 1"/><circle cx="8" cy="8" r="3.500" fill="none" stroke="#555"/><path d="M10.500 10.500l3 3" stroke="#555" stroke-width="1.500"/></svg></div>
  <div class="w-6 flex justify-center"><svg class="w-4 h-4" viewBox="0 0 16 16"><rect x="1" y="1" width="14" height="12" fill="#dde4f2" stroke="#777"/><path d="M6 6h3l3 3v6H7L5 10z" fill="#f0cfa8" stroke="#a07040" stroke-width=".5"/></svg></div>
  <div class="ml-px w-6 flex justify-center"><svg class="w-4 h-4" viewBox="0 0 16 16"><path d="M2.500 9A5.500 5.500 0 0 1 12 4M13.500 7A5.500 5.500 0 0 1 4 12" fill="none" stroke="#4a5a90" stroke-width="1.500"/><path d="M14 1v4h-4zM2 15v-4h4z" fill="#4a5a90"/></svg></div>
  <div class="ml-px w-6 flex justify-center"><svg class="w-4 h-4" viewBox="0 0 16 16"><path d="M1 9l9-4 2 4-9 5z" fill="#5a80d8"/><path d="M13 1v4M11 3h4" stroke="#d03030"/></svg></div>
  <div class="ml-px w-6 flex justify-center"><svg class="w-4 h-4" viewBox="0 0 16 16"><rect x="1" y="1" width="8" height="9" fill="#f6f6f6" stroke="#bbb"/><path d="M6 9h9v6H6z" fill="#eee" stroke="#bbb"/></svg></div>
  <div class="ml-[2px] w-6 flex justify-center"><svg class="w-4 h-4" viewBox="0 0 16 16"><rect x="1" y="1" width="14" height="14" fill="#e8e8f4" stroke="#6070c0"/><rect x="1" y="1" width="14" height="3" fill="#5060b8"/><rect x="4" y="6" width="3" height="3" fill="#e04030"/><rect x="9" y="6" width="3" height="3" fill="#e04030"/><rect x="4" y="10" width="3" height="3" fill="#e04030"/><rect x="9" y="10" width="3" height="3" fill="#e04030"/></svg></div>
  <div class="w-3 flex justify-center"><svg class="w-[6px] h-[4px]" viewBox="0 0 7 4"><use href="#down"/></svg></div>
  <div class="w-6 flex justify-center"><svg class="w-4 h-4" viewBox="0 0 16 16"><path d="M1 12l4-9 5-2 5 8-8 5z" fill="#666"/><path d="M4 9l5-5 4 5-5 3z" fill="#ccc"/></svg></div>
  <div class="w-3 flex justify-center"><svg class="w-[6px] h-[4px]" viewBox="0 0 7 4"><use href="#down"/></svg></div>
  <div class="ml-[2px] w-6 flex justify-center"><svg class="w-4 h-4" viewBox="0 0 16 16"><path d="M1 4l7-3 7 3v9l-7 3-7-3z" fill="#8fa8e4" stroke="#6076c0" stroke-width=".6"/><path d="M1 4l7 3 7-3-7-3z" fill="#bccbf2"/></svg></div>
  <div class="w-3 flex justify-center"><svg class="w-[6px] h-[4px]" viewBox="0 0 7 4"><use href="#down"/></svg></div>
  <div class="w-6 flex justify-center"><svg class="w-4 h-4" viewBox="0 0 16 16"><path d="M1 1l4 3-4 3z" fill="#20a040"/><path d="M1 9l4 3-4 3z" fill="#d03030"/><path d="M6 8l5-5 4 5-4 5z" fill="#b4c4e8" stroke="#7080a0" stroke-width=".6"/></svg></div>
  <div class="w-3 flex justify-center"><svg class="w-[6px] h-[4px]" viewBox="0 0 7 4"><use href="#down"/></svg></div>
  <i class="w-px h-[24px] bg-[#ddd] ml-[6px]"></i>
</section>

<!-- main -->
<main class="h-[838px] shrink-0 flex border-b border-[#a8a8a8]">
  <!-- resource bar -->
  <aside class="w-[32px] shrink-0 bg-[#dcdcdc] border-r border-[#a0a0a0] flex flex-col">
    <div class="h-[27px] flex justify-center items-center"><svg class="w-4 h-4"><use href="#i-gear"/></svg></div>
    <div class="h-[98px] flex flex-col items-center pt-[23px] gap-[17px]">
      <svg class="w-[22px] h-[26px]" viewBox="0 0 22 26"><path d="M2 2l4-1 4 1v5l-4 2-4-2zM7 5l4-1 4 1v5l-4 2-4-2z" fill="#f4c83c" stroke="#a88020" stroke-width=".6"/><path d="M10 16h8M4 13v12M4 19h6" stroke="#1a1ab0" stroke-width="1.100"/><path d="M11 20l4-2 4 2v4l-4 2-4-2z" fill="#f4c83c" stroke="#a88020" stroke-width=".6"/></svg>
      <svg class="w-[22px] h-[24px]" viewBox="0 0 22 24"><path d="M2 1l8 6 8-6v12l-8-6-8 6z" fill="#1414b0"/><rect x="1" y="14" width="9" height="9" fill="#f6f030" stroke="#555"/><path d="M12 23V13l9 10z" fill="#c82020"/></svg>
    </div>
    <div class="h-[45px] w-[32px] -mr-px bg-white border border-r-0 border-[#b0b0b0] ml-[2px] flex items-center justify-center z-10 rounded-tl-[2px] relative"><svg class="w-[22px] h-[24px] -ml-[2px]" viewBox="0 0 22 24"><path d="M1 3c0-2 9-2 9 0v6c0 2-9 2-9 0z" fill="#c43c7c" stroke="#702050" stroke-width=".6"/><path d="M12 8h8M6 12v12M6 19h6" stroke="#1a1ab0"/><circle cx="16" cy="18" r="4" fill="none" stroke="#a03070"/><circle cx="16" cy="18" r="1.500" fill="#a03070"/></svg></div>
    <div class="flex-1 flex flex-col items-center pt-[7px]">
      <svg class="w-[24px] h-[24px]" viewBox="0 0 24 24"><path d="M0 6l3-3h5v18H0z" fill="#e88020"/><path d="M8 6l3-3h5v18H8z" fill="#30b040"/><path d="M16 6l3-3h5v15l-3 3h-5z" fill="#2088e0"/><path d="M0 8h8M8 8h8M16 8h8" stroke="#fff"/></svg>
      <svg class="w-[24px] h-[24px] mt-[32px]" viewBox="0 0 24 24"><path d="M12 2a12 12 0 0 1 12 12M12 6a8 8 0 0 1 8 8" fill="none" stroke="#3a84d8" stroke-width="2.500"/><circle cx="10" cy="15" r="8.500" fill="#1e6fd0"/><rect x="9" y="13" width="2.500" height="6.500" fill="#fff"/><circle cx="10.200" cy="10.500" r="1.500" fill="#fff"/></svg>
      <svg class="w-[20px] h-[24px] mt-[29px]" viewBox="0 0 20 24"><path d="M1 1h13l5 5v17H1z" fill="#fff" stroke="#3070c0"/><circle cx="9.500" cy="14" r="5.500" fill="#3f9a50"/><path d="M6 11c3-2 5 1 7 0 0 3-5 4-7 2z" fill="#4888d8"/></svg>
      <svg class="w-[24px] h-[24px] mt-[28px]" viewBox="0 0 24 24"><circle cx="12" cy="12" r="10.500" fill="#eef2f8" stroke="#707880" stroke-width="1.800"/><path d="M12 4v8h6" fill="none" stroke="#111" stroke-width="1.500"/></svg>
      <svg class="w-[22px] h-[24px] mt-[20px]" viewBox="0 0 22 24"><rect x="1" y="1" width="8" height="22" fill="url(#gRainbow)"/><path d="M10 6l9 15" stroke="#222" stroke-width="3"/><path d="M10 1l1 3 3 1-3 1-1 3-1-3-3-1 3-1z" fill="#fff" stroke="#ddd" stroke-width=".4"/></svg>
      <svg class="w-[24px] h-[24px] mt-[18px]" viewBox="0 0 24 24"><path d="M2 3h7v17H2z" fill="#3068d0"/><path d="M11 5h12l-6 6-6-1z" fill="#4878d8"/><path d="M12 9l8 11" stroke="#222" stroke-width="3"/><path d="M1 21l11 2" stroke="#e8c030" stroke-width="1.500"/></svg>
      <svg class="w-[22px] h-[22px] mt-[18px]" viewBox="0 0 22 22"><path d="M4 19L16 5" stroke="#666" stroke-width="3"/><path d="M11 3l9 1 1 4-5-1zM2 12c3-1 6 2 4 6-1 2-4 2-5 1z" fill="#888" stroke="#555" stroke-width=".5"/><circle cx="5" cy="19" r="3" fill="#f09030"/></svg>
    </div>
  </aside>

  <!-- nav panel -->
  <aside class="w-[332px] shrink-0 bg-white border-r border-[#a0a0a0] flex flex-col">
    <div class="h-[30px] flex items-center pl-[10px] pr-[16px]">
      <span class="flex-1 text-[12px] text-[#222]">部件导航器</span>
      <svg class="w-[12px] h-[12px]" viewBox="0 0 12 12"><rect x=".5" y=".5" width="11" height="11" fill="#fff" stroke="#111"/><path d="M0 1.500h12" stroke="#111" stroke-width="2"/></svg>
    </div>
    <!-- tree -->
    <div class="relative mx-[6px] w-[315px] h-[724px] border border-[#dcdcdc] text-[12px] leading-[20px] text-[#333] overflow-hidden">
      <div class="h-[21px] flex bg-[#f0f0f0] border-b-2 border-[#e2e2e2]">
        <div class="w-[201px] border-r-2 border-[#e2e2e2] pl-[6px] flex items-center"><span>名称</span><svg class="w-[10px] h-[5px] ml-[17px]" viewBox="0 0 10 5"><path d="M0 5h10L5 0z" fill="#222"/></svg></div>
        <div class="w-[100px] border-r-2 border-[#e2e2e2] pl-[6px]">最新</div>
        <div class="pl-[5px] w-[10px] overflow-hidden whitespace-nowrap">附</div>
      </div>
      <div class="h-[20px] flex border-b border-[#eee] bg-white"><div class="w-[201px] border-r border-[#eee] flex items-center pl-[5px] whitespace-nowrap"><svg class="w-[9px] h-[9px]"><use href="#plus"/></svg><svg class="w-4 h-4 ml-[5px]" viewBox="0 0 16 16"><path d="M8 1l6 3v7l-6 3-6-3V4z" fill="none" stroke="#2a9a5a"/><path d="M2 4l6 3 6-3M8 7v7M5 2.500l6 8M11 2.500l-6 8" stroke="#2a9a5a" fill="none" stroke-width=".8"/><path d="M9 15l5-2" stroke="#e05020" stroke-width="1.300"/></svg><span class="ml-[4px]">模型视图</span></div><div class="w-[100px] border-r border-[#eee]"></div></div>
      <div class="h-[20px] flex border-b border-[#eee] bg-[#f8f8f8]"><div class="w-[201px] border-r border-[#eee] flex items-center pl-[5px] whitespace-nowrap"><svg class="w-[9px] h-[9px]"><use href="#plus"/></svg><svg class="w-[13px] h-[13px] ml-[7px]"><use href="#chk"/></svg><svg class="w-4 h-4 ml-[2px]" viewBox="0 0 16 16"><path d="M1 5l11-3 2 9-12 4z" fill="#fff" stroke="#d03020" stroke-width="1.200"/><rect x="5" y="5" width="6" height="5" fill="#304070"/><circle cx="12" cy="9" r="2.500" fill="#222"/></svg><span class="ml-[3px]">摄像机</span></div><div class="w-[100px] border-r border-[#eee]"></div></div>
      <div class="h-[20px] flex border-b border-[#eee] bg-white"><div class="w-[201px] border-r border-[#eee] flex items-center pl-[19px] whitespace-nowrap"><svg class="w-4 h-[14px]"><use href="#folder"/></svg><span class="ml-[4px]">用户表达式</span></div><div class="w-[100px] border-r border-[#eee]"></div></div>
      <div class="h-[20px] flex border-b border-[#eee] bg-[#f8f8f8]"><div class="w-[201px] border-r border-[#eee] flex items-center pl-[19px] whitespace-nowrap"><svg class="w-4 h-[14px]"><use href="#folder"/></svg><span class="ml-[4px]">非时间戳记几何体</span></div><div class="w-[100px] border-r border-[#eee]"></div></div>
      <div class="h-[20px] flex border-b border-[#eee] bg-white"><div class="w-[201px] border-r border-[#eee] flex items-center pl-[5px] whitespace-nowrap"><svg class="w-[9px] h-[9px]"><use href="#minus"/></svg><svg class="w-4 h-[14px] ml-[5px]"><use href="#folder"/></svg><span class="ml-[4px]">模型历史记录</span></div><div class="w-[100px] border-r border-[#eee]"></div></div>

      <div class="h-[20px] flex border-b border-[#eee] bg-[#f8f8f8]"><div class="w-[201px] border-r border-[#eee] flex items-center pl-[40px] whitespace-nowrap"><svg class="w-[13px] h-[13px]"><use href="#tchk"/></svg><svg class="w-4 h-4 ml-[2px]" viewBox="0 0 16 16"><path d="M2 2v10l7 3 6-4-6-3-7 4" fill="none" stroke="#333" stroke-width=".9"/><path d="M2 2V0" stroke="#2040d0"/><path d="M9 8l5-4" stroke="#20a040"/><path d="M9 15l3 1" stroke="#d03030"/></svg><span class="ml-[3px]">基准坐标系 (0)</span></div><div class="w-[100px] border-r border-[#eee] flex items-center pl-[6px]"><svg class="w-[13px] h-[13px]"><use href="#chk"/></svg></div></div>
      <div class="h-[20px] flex border-b border-[#eee] bg-white"><div class="w-[201px] border-r border-[#eee] flex items-center pl-[40px] whitespace-nowrap"><svg class="w-[13px] h-[13px]"><use href="#tchk"/></svg><svg class="w-4 h-4 ml-[2px]" viewBox="0 0 16 16"><rect x="1.500" y="1.500" width="5" height="5" fill="#fff" stroke="#222"/><rect x="1.500" y="9.500" width="5" height="5" fill="#fff" stroke="#222"/><rect x="9.500" y="9.500" width="5" height="5" fill="#fff" stroke="#222"/><path d="M9 7l5-6 1 1-5 6z" fill="#f0c020" stroke="#c03020" stroke-width=".4"/></svg><span class="ml-[3px]">草图 (1) "SKETCH_0...</span></div><div class="w-[100px] border-r border-[#eee] flex items-center pl-[6px]"><svg class="w-[13px] h-[13px]"><use href="#chk"/></svg></div></div>
      <div class="h-[20px] flex border-b border-[#eee] bg-[#f8f8f8]"><div class="w-[201px] border-r border-[#eee] flex items-center pl-[40px] whitespace-nowrap"><svg class="w-[13px] h-[13px]"><use href="#tchk"/></svg><svg class="w-4 h-4 ml-[2px]"><use href="#ext"/></svg><span class="ml-[3px]">拉伸 (2)</span></div><div class="w-[100px] border-r border-[#eee] flex items-center pl-[6px]"><svg class="w-[13px] h-[13px]"><use href="#chk"/></svg></div></div>
      <div class="h-[20px] flex border-b border-[#eee] bg-white"><div class="w-[201px] border-r border-[#eee] flex items-center pl-[40px] whitespace-nowrap"><svg class="w-[13px] h-[13px]"><use href="#tchk"/></svg><svg class="w-4 h-4 ml-[2px]"><use href="#ext"/></svg><span class="ml-[3px]">拉伸 (3)</span></div><div class="w-[100px] border-r border-[#eee] flex items-center pl-[6px]"><svg class="w-[13px] h-[13px]"><use href="#chk"/></svg></div></div>
      <div class="h-[20px] flex border-b border-[#eee] bg-[#f8f8f8]"><div class="w-[201px] border-r border-[#eee] flex items-center pl-[40px] whitespace-nowrap"><svg class="w-[13px] h-[13px]"><use href="#tchk"/></svg><svg class="w-4 h-4 ml-[2px]"><use href="#ext"/></svg><span class="ml-[3px]">拉伸 (4)</span></div><div class="w-[100px] border-r border-[#eee] flex items-center pl-[6px]"><svg class="w-[13px] h-[13px]"><use href="#chk"/></svg></div></div>
      <div class="h-[20px] flex border-b border-[#eee] bg-white"><div class="w-[201px] border-r border-[#eee] flex items-center pl-[40px] whitespace-nowrap"><svg class="w-[13px] h-[13px]"><use href="#tchk"/></svg><svg class="w-4 h-4 ml-[2px]"><use href="#ext"/></svg><span class="ml-[3px]">拉伸 (5)</span></div><div class="w-[100px] border-r border-[#eee] flex items-center pl-[6px]"><svg class="w-[13px] h-[13px]"><use href="#chk"/></svg></div></div>
      <div class="h-[20px] flex border-b border-[#eee] bg-[#f8f8f8]"><div class="w-[201px] border-r border-[#eee] flex items-center pl-[40px] whitespace-nowrap"><svg class="w-[13px] h-[13px]"><use href="#tchk"/></svg><svg class="w-4 h-4 ml-[2px]"><use href="#ext"/></svg><span class="ml-[3px]">拉伸 (6)</span></div><div class="w-[100px] border-r border-[#eee] flex items-center pl-[6px]"><svg class="w-[13px] h-[13px]"><use href="#chk"/></svg></div></div>
      <div class="h-[20px] flex border-b border-[#eee] bg-white"><div class="w-[201px] border-r border-[#eee] flex items-center pl-[40px] whitespace-nowrap"><svg class="w-[13px] h-[13px]"><use href="#tchk"/></svg><svg class="w-4 h-4 ml-[2px]" viewBox="0 0 16 16"><path d="M1 4l5-3h9v10l-3 4H4z" fill="#a8b8f0" stroke="#3050c0" stroke-width=".7"/><path d="M1 4l11 3-1 3L2 7z" fill="#f4a060"/></svg><span class="ml-[3px]">倒斜角 (8)</span></div><div class="w-[100px] border-r border-[#eee] flex items-center pl-[6px]"><svg class="w-[13px] h-[13px]"><use href="#chk"/></svg></div></div>
      <div class="h-[20px] flex border-b border-[#eee] bg-[#f8f8f8]"><div class="w-[201px] border-r border-[#eee] flex items-center pl-[40px] whitespace-nowrap"><svg class="w-[13px] h-[13px]"><use href="#tchk"/></svg><svg class="w-4 h-4 ml-[2px]" viewBox="0 0 16 16"><path d="M1 5c2-3 9-4 13-4l1 2v8l-4 4H2z" fill="#7090e0" stroke="#2848b0" stroke-width=".7"/><path d="M1 5c3-2 8-3 12-3-2 1-3 3-3 5L1 6z" fill="#f4d090"/><path d="M1 7l9 1" stroke="#d04020"/></svg><span class="ml-[3px] font-bold text-[#111]">边倒圆 (9)</span></div><div class="w-[100px] border-r border-[#eee] flex items-center pl-[6px]"><svg class="w-[13px] h-[13px]"><use href="#chk"/></svg></div></div>

      <div class="h-[20px] flex border-b border-[#eee] bg-white"><div class="w-[201px] border-r border-[#eee]"></div><div class="w-[100px] border-r border-[#eee]"></div></div>
      <div class="h-[20px] flex border-b border-[#eee] bg-[#f8f8f8]"><div class="w-[201px] border-r border-[#eee]"></div><div class="w-[100px] border-r border-[#eee]"></div></div>
      <div class="h-[20px] flex border-b border-[#eee] bg-white"><div class="w-[201px] border-r border-[#eee]"></div><div class="w-[100px] border-r border-[#eee]"></div></div>
      <div class="h-[20px] flex border-b border-[#eee] bg-[#f8f8f8]"><div class="w-[201px] border-r border-[#eee]"></div><div class="w-[100px] border-r border-[#eee]"></div></div>
      <div class="h-[20px] flex border-b border-[#eee] bg-white"><div class="w-[201px] border-r border-[#eee]"></div><div class="w-[100px] border-r border-[#eee]"></div></div>
      <div class="h-[20px] flex border-b border-[#eee] bg-[#f8f8f8]"><div class="w-[201px] border-r border-[#eee]"></div><div class="w-[100px] border-r border-[#eee]"></div></div>
      <div class="h-[20px] flex border-b border-[#eee] bg-white"><div class="w-[201px] border-r border-[#eee]"></div><div class="w-[100px] border-r border-[#eee]"></div></div>
      <div class="h-[20px] flex border-b border-[#eee] bg-[#f8f8f8]"><div class="w-[201px] border-r border-[#eee]"></div><div class="w-[100px] border-r border-[#eee]"></div></div>
      <div class="h-[20px] flex border-b border-[#eee] bg-white"><div class="w-[201px] border-r border-[#eee]"></div><div class="w-[100px] border-r border-[#eee]"></div></div>
      <div class="h-[20px] flex border-b border-[#eee] bg-[#f8f8f8]"><div class="w-[201px] border-r border-[#eee]"></div><div class="w-[100px] border-r border-[#eee]"></div></div>
      <div class="h-[20px] flex border-b border-[#eee] bg-white"><div class="w-[201px] border-r border-[#eee]"></div><div class="w-[100px] border-r border-[#eee]"></div></div>
      <div class="h-[20px] flex border-b border-[#eee] bg-[#f8f8f8]"><div class="w-[201px] border-r border-[#eee]"></div><div class="w-[100px] border-r border-[#eee]"></div></div>
      <div class="h-[20px] flex border-b border-[#eee] bg-white"><div class="w-[201px] border-r border-[#eee]"></div><div class="w-[100px] border-r border-[#eee]"></div></div>
      <div class="h-[20px] flex border-b border-[#eee] bg-[#f8f8f8]"><div class="w-[201px] border-r border-[#eee]"></div><div class="w-[100px] border-r border-[#eee]"></div></div>
      <div class="h-[20px] flex border-b border-[#eee] bg-white"><div class="w-[201px] border-r border-[#eee]"></div><div class="w-[100px] border-r border-[#eee]"></div></div>
      <div class="h-[20px] flex border-b border-[#eee] bg-[#f8f8f8]"><div class="w-[201px] border-r border-[#eee]"></div><div class="w-[100px] border-r border-[#eee]"></div></div>
      <div class="h-[20px] flex border-b border-[#eee] bg-white"><div class="w-[201px] border-r border-[#eee]"></div><div class="w-[100px] border-r border-[#eee]"></div></div>
      <div class="h-[20px] flex border-b border-[#eee] bg-[#f8f8f8]"><div class="w-[201px] border-r border-[#eee]"></div><div class="w-[100px] border-r border-[#eee]"></div></div>
      <div class="h-[20px] flex border-b border-[#eee] bg-white"><div class="w-[201px] border-r border-[#eee]"></div><div class="w-[100px] border-r border-[#eee]"></div></div>
      <div class="h-[20px] flex border-b border-[#eee] bg-[#f8f8f8]"><div class="w-[201px] border-r border-[#eee]"></div><div class="w-[100px] border-r border-[#eee]"></div></div>

      <!-- tree connector lines -->
      <i class="absolute left-[9px] top-[37px] h-[74px] border-l border-dotted border-[#888]"></i>
      <i class="absolute left-[9px] top-[71px] w-[10px] border-t border-dotted border-[#888]"></i>
      <i class="absolute left-[9px] top-[91px] w-[10px] border-t border-dotted border-[#888]"></i>
      <i class="absolute left-[29px] top-[119px] h-[172px] border-l border-dotted border-[#888]"></i>
      <i class="absolute left-[29px] top-[131px] w-[10px] border-t border-dotted border-[#888]"></i>
      <i class="absolute left-[29px] top-[151px] w-[10px] border-t border-dotted border-[#888]"></i>
      <i class="absolute left-[29px] top-[171px] w-[10px] border-t border-dotted border-[#888]"></i>
      <i class="absolute left-[29px] top-[191px] w-[10px] border-t border-dotted border-[#888]"></i>
      <i class="absolute left-[29px] top-[211px] w-[10px] border-t border-dotted border-[#888]"></i>
      <i class="absolute left-[29px] top-[231px] w-[10px] border-t border-dotted border-[#888]"></i>
      <i class="absolute left-[29px] top-[251px] w-[10px] border-t border-dotted border-[#888]"></i>
      <i class="absolute left-[29px] top-[271px] w-[10px] border-t border-dotted border-[#888]"></i>
      <i class="absolute left-[29px] top-[291px] w-[10px] border-t border-dotted border-[#888]"></i>

      <!-- scrollbar -->
      <div class="absolute left-0 right-0 bottom-0 h-[18px] bg-[#f0f0f0] flex items-center px-[2px] border-t border-[#e8e8e8]">
        <svg class="w-[14px] h-[6px]" viewBox="0 0 14 6"><path d="M8 0v6L4 3z" fill="#333"/></svg>
        <div class="w-[214px] h-[16px] ml-[2px] rounded-[2px] border border-[#a0a0a0] bg-linear-to-b from-[#f0f0f0] to-[#c4c4c4] text-center text-[8px] leading-[13px] text-[#444] font-bold">III</div>
        <div class="flex-1"></div>
        <svg class="w-[14px] h-[6px]" viewBox="0 0 14 6"><path d="M6 0v6l4-3z" fill="#333"/></svg>
      </div>
    </div>
    <!-- splitter -->
    <div class="mx-[6px] w-[316px] h-[5px] mt-[1px] bg-[#d4d4d4] border border-[#b4b4b4]"></div>
    <!-- accordions -->
    <div class="flex-1 mx-[6px] w-[316px] text-[14px] leading-[22px] text-[#1180a8] pt-[2px]">
      <div class="h-[24px] flex items-center border-b-2 border-[#d0d0d0] pl-[7px] pr-[5px]"><span class="flex-1">相关性</span><svg class="w-[12px] h-[9px] -mt-[3px]" viewBox="0 0 12 9"><path d="M1 1.500l5 5.500 5-5.500" fill="none" stroke="#0c6a8a" stroke-width="2"/></svg></div>
      <div class="h-[24px] flex items-center border-b-2 border-[#d0d0d0] pl-[7px] pr-[5px]"><span class="flex-1">细节</span><svg class="w-[12px] h-[9px] -mt-[3px]" viewBox="0 0 12 9"><path d="M1 1.500l5 5.500 5-5.500" fill="none" stroke="#0c6a8a" stroke-width="2"/></svg></div>
      <div class="h-[24px] flex items-center border-b-2 border-[#d0d0d0] pl-[7px] pr-[5px]"><span class="flex-1">预览</span><svg class="w-[12px] h-[9px] -mt-[3px]" viewBox="0 0 12 9"><path d="M1 1.500l5 5.500 5-5.500" fill="none" stroke="#0c6a8a" stroke-width="2"/></svg></div>
    </div>
  </aside>

  <!-- graphics window -->
  <div class="flex-1 flex flex-col min-w-0">
    <div class="h-[21px] shrink-0 bg-white flex">
      <div class="w-[98px] h-[21px] bg-[#53a0bb] flex items-center pl-[7px] text-white text-[12px]">
        <svg class="w-[14px] h-[14px]" viewBox="0 0 14 14"><path d="M2 4l5-3 5 2v3L9 8v3l-4 2-3-2z" fill="#2f5fc8" stroke="#dfe8ff" stroke-width=".6"/></svg>
        <span class="ml-[5px]">53.prt</span>
        <svg class="w-[11px] h-[11px] ml-[6px]" viewBox="0 0 11 11"><path d="M1 1h7v3M1 1v9h8V7" fill="none" stroke="#fff" stroke-width="1.200"/><path d="M4 7l5-5 1.500 1.500-5 5z" fill="#fff"/></svg>
        <svg class="w-[9px] h-[9px] ml-[5px]" viewBox="0 0 9 9"><path d="M1 1l7 7M8 1L1 8" stroke="#fff" stroke-width="1.800"/></svg>
      </div>
    </div>
    <div class="relative flex-1 bg-linear-to-b from-[#b4b5b7] via-[#d6d7d9] via-50% to-[#e6e7e9] overflow-hidden">
      <svg class="absolute left-0 top-0" width="1141" height="817" viewBox="364 201 1141 817">
        <defs>
          <linearGradient id="wallOut" gradientUnits="userSpaceOnUse" x1="670" y1="0" x2="1345" y2="0"><stop offset="0" stop-color="#ad6c00"/><stop offset=".42" stop-color="#845100"/><stop offset=".7" stop-color="#a56600"/><stop offset=".88" stop-color="#c87c00"/><stop offset="1" stop-color="#d98600"/></linearGradient>
          <linearGradient id="wallRecess" gradientUnits="userSpaceOnUse" x1="796" y1="0" x2="1210" y2="0"><stop offset="0" stop-color="#da8600"/><stop offset=".3" stop-color="#b87200"/><stop offset=".6" stop-color="#875300"/><stop offset="1" stop-color="#a06200"/></linearGradient>
          <linearGradient id="wallSlot" gradientUnits="userSpaceOnUse" x1="949" y1="0" x2="1312" y2="0"><stop offset="0" stop-color="#dc8800"/><stop offset=".1" stop-color="#8c5700"/><stop offset=".5" stop-color="#8c5700"/><stop offset="1" stop-color="#a56600"/></linearGradient>
          <linearGradient id="wallHole" gradientUnits="userSpaceOnUse" x1="917" y1="0" x2="1100" y2="0"><stop offset="0" stop-color="#d68400"/><stop offset=".5" stop-color="#8a5500"/><stop offset=".6" stop-color="#a86800"/><stop offset=".75" stop-color="#885400"/><stop offset=".9" stop-color="#945b00"/><stop offset="1" stop-color="#bc7400"/></linearGradient>
          <radialGradient id="fillet" cx=".5" cy=".5" r=".5"><stop offset=".86" stop-color="#ffc600"/><stop offset=".93" stop-color="#ffb400"/><stop offset=".97" stop-color="#ea9000"/><stop offset="1" stop-color="#c87800"/></radialGradient>
          <clipPath id="recessClip"><ellipse cx="1003" cy="602" rx="206.500" ry="121" transform="rotate(-3 1003 602)"/></clipPath>
          <clipPath id="holeClip"><path d="M917,660 C 920,625 965,600 1004,600 L1026,600 C 1035,594 1050,593 1062,593 C 1085,594 1100,606 1100,618 C1100,624 1097,628 1094,630 C 1098,636 1099,645 1099,653 C 1095,680 1040,708 998,707 C 955,707 925,690 917,660 Z"/></clipPath>
          <filter id="soft" x="-10%" y="-10%" width="120%" height="120%"><feGaussianBlur stdDeviation="1.800"/></filter>
        </defs>

        <!-- outer wall -->
        <path d="M669,623 L677,695 A334,201 -3.850 0 0 1345,650 L1337,587 Z" fill="url(#wallOut)"/>
        <path d="M677,695 A334,201 -3.850 0 0 1345,650" fill="none" stroke="#4a68ff" stroke-width="2"/>
        <!-- top face -->
        <ellipse cx="1003" cy="602" rx="334.500" ry="195" transform="rotate(-3 1003 602)" fill="#ffc600" stroke="#3d4146" stroke-width=".8"/>

        <!-- recess -->
        <g clip-path="url(#recessClip)">
          <rect x="790" y="475" width="425" height="255" fill="url(#wallRecess)"/>
          <ellipse cx="1006" cy="640" rx="205" ry="120" transform="rotate(-3 1006 640)" fill="url(#fillet)" stroke="#3d4146" stroke-width=".7"/>
          <path d="M812,640 C 825,600 860,570 910,552 C 930,545 950,540 975,536" fill="none" stroke="#ffe93a" stroke-width="5" stroke-linecap="round" filter="url(#soft)"/>
          <ellipse cx="1008" cy="653" rx="191" ry="112" transform="rotate(-3 1008 653)" fill="#ffc600" stroke="#3d4146" stroke-width=".8"/>
        </g>
        <ellipse cx="1003" cy="602" rx="206.500" ry="121" transform="rotate(-3 1003 602)" fill="none" stroke="#3d4146" stroke-width=".8"/>

        <!-- arc slot -->
        <path d="M949,445 C 951,432 968,424 982,423 C 1010,420 1030,420 1042,421 C 1080,422 1115,426 1144,433 C 1170,440 1195,450 1216,463 C 1240,475 1258,488 1271,500 C 1288,516 1298,530 1304,543 C 1310,555 1313,562 1312,570 C 1310,582 1295,594 1271,594 C 1258,594 1248,589 1243,582 C 1238,572 1238,565 1235,558 C 1232,548 1228,540 1224,533 C 1210,520 1197,510 1180,500 C 1158,490 1130,478 1107,472 C 1085,466 1060,463 1042,462 C 1020,461 1000,463 987,464 C 968,465 950,458 949,445 Z" fill="url(#wallSlot)" stroke="#3d4146" stroke-width=".8"/>
        <path d="M982,423 L987,464" stroke="#3d4146" stroke-width=".8"/>
        <path d="M1224,533 C 1250,545 1275,565 1296,588 C 1285,594 1265,596 1255,590 L1243,581 C 1238,565 1232,545 1224,533Z" fill="#d3d4d7"/>
        <path d="M1224,533 C 1250,545 1275,565 1296,588 M1242,578 L1254,590" fill="none" stroke="#4a68ff" stroke-width="1.500"/>

        <!-- key hole -->
        <path d="M917,660 C 920,625 965,600 1004,600 L1026,600 C 1035,594 1050,593 1062,593 C 1085,594 1100,606 1100,618 C1100,624 1097,628 1094,630 C 1098,636 1099,645 1099,653 C 1095,680 1040,708 998,707 C 955,707 925,690 917,660 Z" fill="url(#wallHole)" stroke="#3d4146" stroke-width=".8"/>
        <g clip-path="url(#holeClip)">
          <path d="M922,675 C 940,650 975,630 1005,626 L1031,625 C 1042,621 1052,619 1062,619 C 1075,620 1088,624 1094,630 L1096,670 L1040,715 L960,715 Z" fill="#d9dade"/>
        </g>
        <path d="M922,675 C 940,650 975,630 1005,626 L1031,625 C 1042,621 1052,619 1062,619 C 1075,620 1088,624 1094,630" fill="none" stroke="#4a68ff" stroke-width="1.800"/>
        <path d="M1026,600 L1027,624" stroke="#3d4146" stroke-width=".8"/>

        <!-- WCS -->
        <path d="M1000,583 L1006,626 L1010,680" fill="none" stroke="#1a1af0" stroke-width=".8"/>
        <path d="M1006,626 L1055,647 L1060,700 L1010,680 L975,708 M1006,626 L961,657 L966,709" fill="none" stroke="#1a1af0" stroke-width=".8"/>
        <path d="M1003,680 h15 M1010.500,673 v14" stroke="#1212e0" stroke-width="1.800"/>
        <path d="M1000,573 l4,13 h-7 z" fill="#1212c8"/>
        <text x="994" y="571" font-size="13" fill="#3030e8" font-family="Liberation Sans">Z</text>
        <path d="M966,711 L1016,734 L1060,701 L1102,721 M966,711 L930,738" fill="none" stroke="#e3dfc2" stroke-width="1"/>
        <path d="M923,743 l10,-9 l3,5 z M1112,722 l-12,-6 l-2,6 z" fill="#e8e8e8"/>
        <text x="913" y="751" font-size="13" fill="#e6e0c4" font-family="Liberation Sans">X</text>
        <text x="1111" y="730" font-size="13" fill="#e6e0c4" font-family="Liberation Sans">Y</text>

        <!-- small triad -->
        <path d="M428,930 L447,940 L449,960 L432,972 L412,961 L410,942 Z" fill="#c4c6c8" fill-opacity=".85" stroke="#b2b4b6"/>
        <path d="M410,942 L430,952 L447,940 M430,952 L432,972" fill="none" stroke="#b2b4b6"/>
        <path d="M429,952 L427,925" stroke="#8fa0d8" stroke-width="3"/>
        <path d="M430,952 L411,965" stroke="#e0a8a8" stroke-width="3"/>
        <path d="M430,952 L450,960" stroke="#a0c8a0" stroke-width="3"/>
        <path d="M427,915 l3.500,11 l-2,2 h-3 l-2,-2 z" fill="#1040c0"/>
        <path d="M401,971 l11,-8 l2,3 z" fill="#e03030"/>
        <path d="M463,965 l-13,-8 l-1,5 z" fill="#20902a"/>
        <text x="421" y="915" font-size="12" fill="#3a3ae0" font-family="Liberation Sans">Z</text>
        <text x="393" y="978" font-size="12" fill="#d84848" font-family="Liberation Sans">X</text>
        <text x="463" y="971" font-size="12" fill="#48a058" font-family="Liberation Sans">Y</text>
      </svg>
      <span class="absolute right-[2px] bottom-0 text-[14px] leading-[18px] tracking-[.3px] text-[#6e6e6e] whitespace-nowrap font-['Liberation_Mono','Noto_Sans_CJK_SC',monospace] [text-shadow:1px_1px_0_#fff]">UG爱好者论坛@yuzh112400</span>
    </div>
  </div>
</main>
</div>
</body>
</html>
